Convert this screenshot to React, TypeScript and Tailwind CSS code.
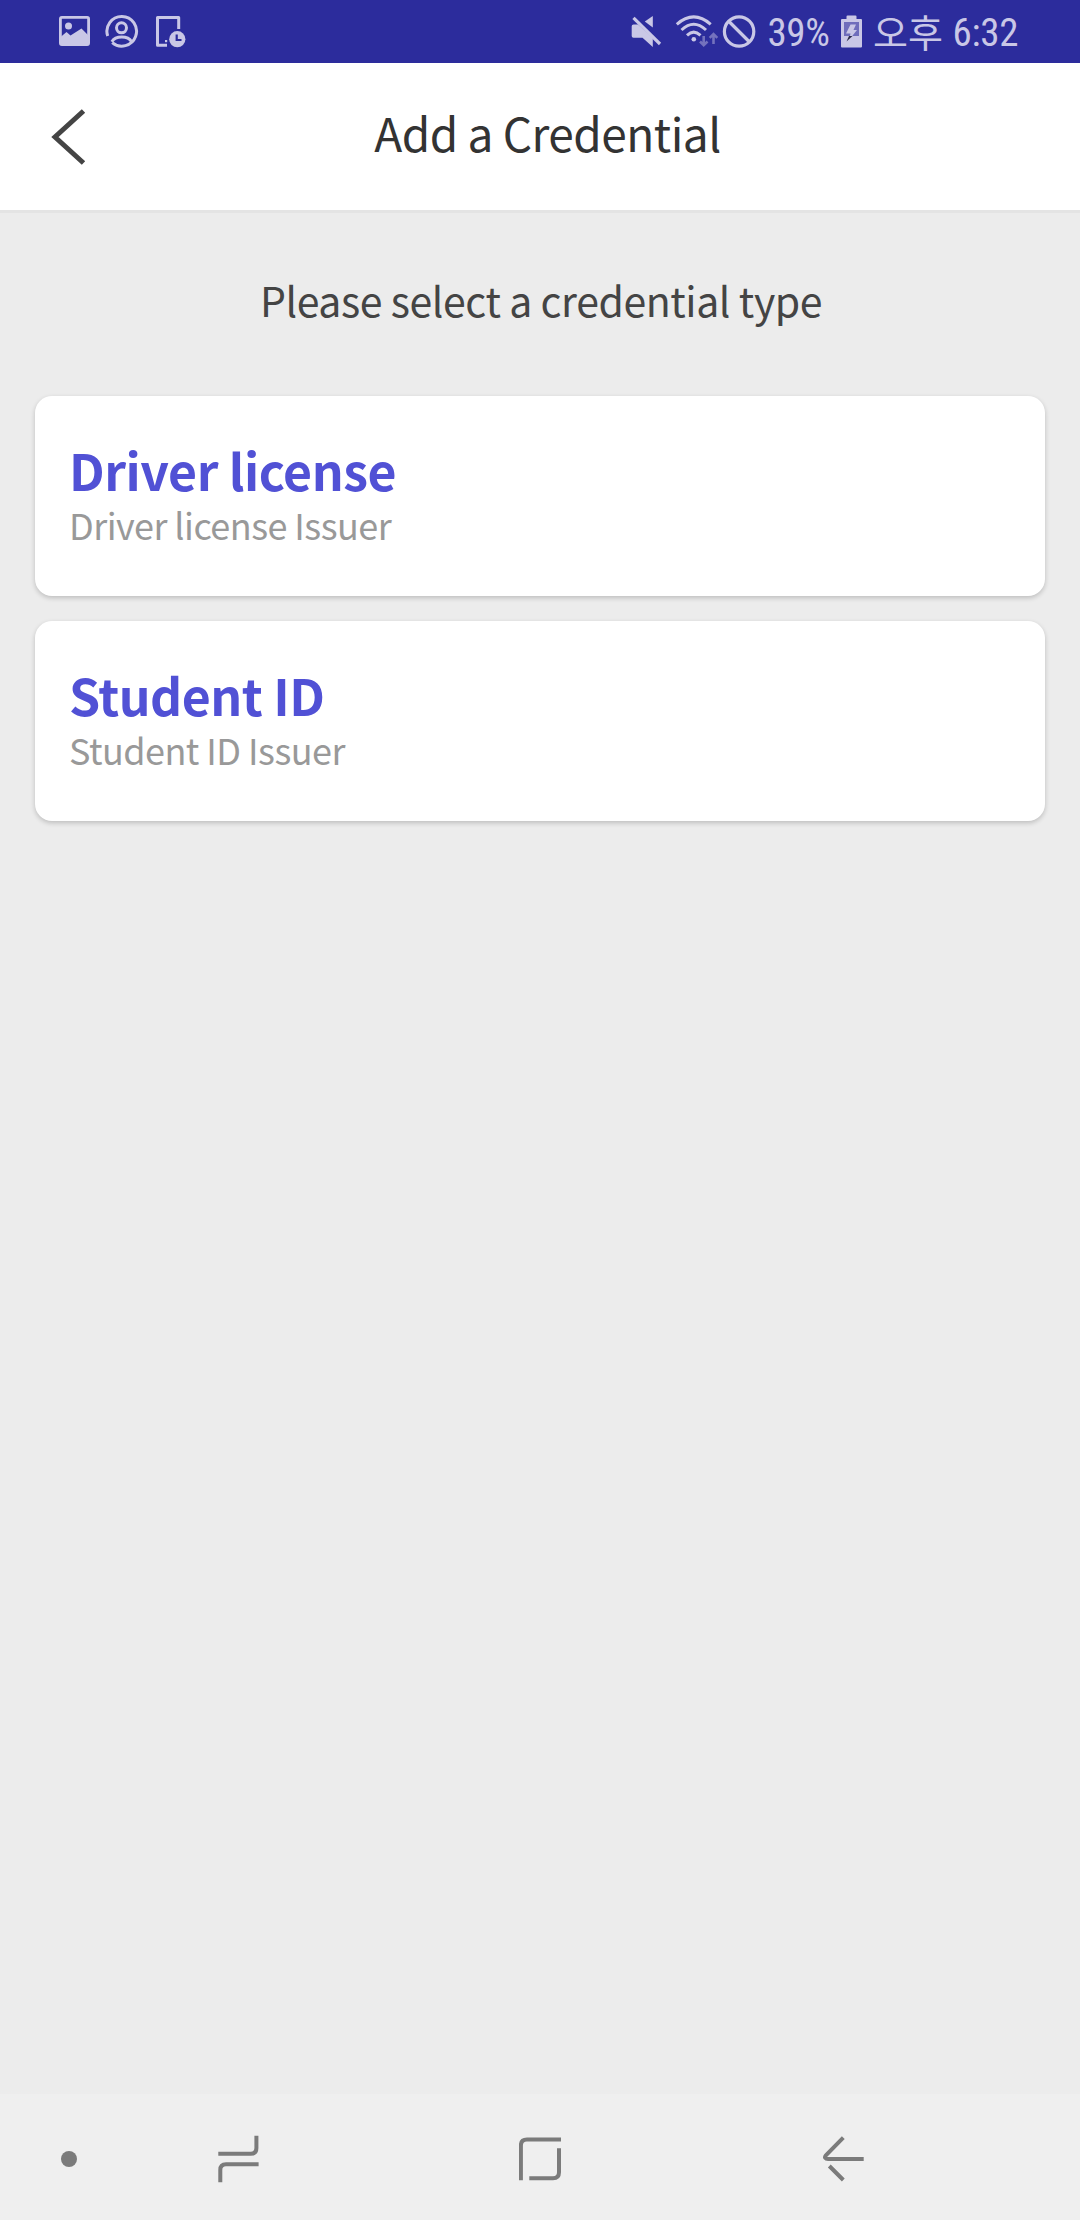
const CREDENTIALS = [
  { name: "Driver license", issuer: "Driver license Issuer" },
  { name: "Student ID", issuer: "Student ID Issuer" },
];

function StatusBar() {
  return (
    <div className="flex h-[63px] shrink-0 items-start overflow-hidden bg-[#2c2c9c] pl-[59px] text-[#c9c7e6]">
      {/* picture */}
      <svg className="h-[63px] w-[31px] shrink-0" viewBox="59 0 31 63" fill="none">
        <rect x="60.4" y="17.4" width="28.2" height="27.2" rx="1.5" stroke="currentColor" strokeWidth="2.8" />
        <circle cx="68.5" cy="26" r="3.5" fill="currentColor" />
        <path d="M60 37.5L66.500 32L70.500 35.500L81.500 28.500L89 36V45H60Z" fill="currentColor" />
      </svg>
      {/* profile */}
      <svg className="ml-[14px] h-[63px] w-[35px] shrink-0" viewBox="104 0 35 63" fill="none" stroke="currentColor" strokeWidth="3">
        <path d="M107.700 36A14.800 14.800 0 1 1 112.200 42.600" />
        <circle cx="121.500" cy="27.800" r="5" />
        <path d="M111.800 41.700C115.500 35.500 128 35.500 131.600 41.700" />
      </svg>
      {/* device with clock */}
      <svg className="ml-[17px] h-[63px] w-[30px] shrink-0" viewBox="156 0 30 63" fill="none">
        <path d="M167 45.300H157.500V17.500H178.700V29" stroke="currentColor" strokeWidth="3" strokeLinejoin="round" />
        <rect x="165" y="40" width="2.200" height="2.200" fill="currentColor" />
        <circle cx="177.300" cy="39.200" r="8.100" fill="currentColor" />
        <path d="M176.700 34.500V40H181.500" stroke="#2c2c9c" strokeWidth="2.200" />
      </svg>
      {/* muted */}
      <svg className="ml-[445px] h-[63px] w-[31px] shrink-0" viewBox="631 0 31 63" fill="none">
        <path d="M652.800 16V27.500L644.800 21.500Z" fill="currentColor" />
        <path d="M633.500 24.500H638L652.800 38V47L642.500 37.800H633.500Q631.700 37.800 631.700 36V26.300Q631.700 24.500 633.500 24.500Z" fill="currentColor" />
        <path d="M633.500 17.800L660 44" stroke="currentColor" strokeWidth="3.200" />
      </svg>
      {/* wifi */}
      <svg className="ml-[13px] h-[63px] w-[44px] shrink-0" viewBox="675 0 44 63" fill="none" stroke="currentColor">
        <path d="M676.800 24.300Q693.700 9.500 710.700 24.300M681.500 30Q693.700 18.500 706 30M687 35.300Q693.700 29 700.500 35.300" strokeWidth="3" />
        <circle cx="693.800" cy="39.300" r="2.300" fill="currentColor" stroke="none" />
        <path d="M703.700 36V45M700 41.500L703.700 45.200L707.500 41.500M713.500 44V34M709.700 37.800L713.500 34L717.300 37.800" stroke="#7472bd" strokeWidth="2.600" />
      </svg>
      {/* blocked */}
      <svg className="ml-[3px] h-[63px] w-[35px] shrink-0" viewBox="722 0 35 63" fill="none" stroke="currentColor" strokeWidth="3.200">
        <circle cx="739.100" cy="31.500" r="14.700" />
        <path d="M729 21.500L749.500 42" />
      </svg>
      <span className="ml-[10.5px] w-[73.5px] shrink-0 font-['Roboto_Condensed','Roboto',sans-serif] text-[39px] leading-[67px] tracking-[-0.4px] [font-stretch:75%]">39%</span>
      {/* battery */}
      <svg className="h-[63px] w-[22px] shrink-0" viewBox="841 0 22 63">
        <path d="M846.500 19V16.500Q846.500 15.500 847.500 15.500H855.500Q856.500 15.500 856.500 16.500V19H861Q862 19 862 20V46.500Q862 47.500 861 47.500H842Q841 47.500 841 46.500V20Q841 19 842 19Z" fill="currentColor" />
        <rect x="844" y="22" width="15" height="14" fill="#6f6dbb" />
        <path d="M850.500 24.500H856L853.500 30H857L849 40L850.500 33.500H846Z" fill="currentColor" />
        <path d="M846.500 41.500L849 36H852.500Z" fill="#2a2a48" />
      </svg>
      <span className="ml-[10px] w-[79px] shrink-0 whitespace-nowrap font-['Noto_Sans_CJK_KR',sans-serif] text-[38px] leading-[62px]">오후</span>
      <span className="ml-[0.5px] shrink-0 font-['Roboto_Condensed','Roboto',sans-serif] text-[39px] leading-[67px] tracking-[-0.3px] [font-stretch:75%]">6:32</span>
    </div>
  );
}

function Header() {
  return (
    <header className="flex h-[150px] shrink-0 items-center border-b-[3px] border-[#e4e4e4] bg-white">
      <svg className="ml-[48px] h-[60px] w-[40px] shrink-0" viewBox="48 106.500 40 60" fill="none" stroke="#444" strokeWidth="5">
        <path d="M83.500 110.500L55 136.500L83.500 162.500" />
      </svg>
      <h1 className="mr-[73px] flex-1 pb-[9px] text-center text-[46px] leading-[60px] tracking-[-0.52px] text-[#333]">
        Add a Credential
      </h1>
    </header>
  );
}

function NavBar() {
  return (
    <nav className="flex h-[126px] shrink-0 bg-[#efefef] text-[#7b7b7b]">
      <svg className="ml-[61px] h-[126px] w-[16px]" viewBox="61 0 16 126">
        <circle cx="69" cy="65" r="8" fill="currentColor" />
      </svg>
      <svg className="ml-[141px] h-[126px] w-[41px]" viewBox="218 0 41 126" fill="none" stroke="currentColor" strokeWidth="4">
        <path d="M256.400 41.700V54Q256.400 59.700 250.700 59.700H218.300M258.600 70.300H226Q220.300 70.300 220.300 76V88.200" />
      </svg>
      <svg className="ml-[260px] h-[126px] w-[42px]" viewBox="519 0 42 126" fill="none" stroke="currentColor" strokeWidth="4">
        <path d="M520.900 86.300V51.500Q520.900 45.500 526.900 45.500H561M559 54.300V78.300Q559 84.300 553 84.300H529.300" />
      </svg>
      <svg className="ml-[261px] h-[126px] w-[42px]" viewBox="822 0 42 126" fill="none" stroke="currentColor" strokeWidth="4">
        <path d="M843.300 43.700L825.900 61.300Q824.500 63 825.300 64Q826 65.100 828 65.100H863.700M829.300 72L843.300 86" />
      </svg>
    </nav>
  );
}

export default function App() {
  return (
    <div className="flex h-[2220px] w-[1080px] flex-col overflow-hidden bg-[#ececec] font-['Noto_Sans_CJK_KR',sans-serif]">
      <StatusBar />
      <Header />
      <main className="flex flex-1 flex-col px-[35px] pt-[56px]">
        <p className="pl-[2px] text-center text-[41px] leading-[60px] tracking-[-0.42px] text-[#444]">
          Please select a credential type
        </p>
        <div className="mt-[67.3px] flex flex-col gap-[25.6px]">
          {CREDENTIALS.map((c) => (
            <section
              key={c.name}
              className="h-[199.4px] rounded-[17px] bg-white pt-[43px] pl-[34px] shadow-[0_2px_5px_rgba(0,0,0,0.2)]"
            >
              <h2 className="text-[50px] leading-[60px] font-bold tracking-[-0.5px] text-[#5151d5]">{c.name}</h2>
              <p className="text-[36px] leading-[50px] tracking-[-0.55px] text-[#999]">{c.issuer}</p>
            </section>
          ))}
        </div>
      </main>
      <NavBar />
    </div>
  );
}
